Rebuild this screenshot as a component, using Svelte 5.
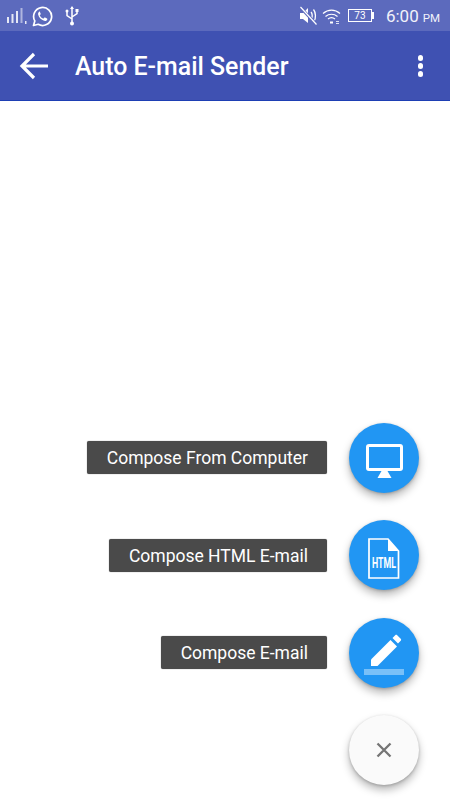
<script>
	const actions = [
		{ label: 'Compose From Computer', icon: 'computer' },
		{ label: 'Compose HTML E-mail', icon: 'html' },
		{ label: 'Compose E-mail', icon: 'pencil' }
	];
</script>

<div class="page">
	<div class="statusbar">
		<div class="status-left">
			<svg width="22" height="16" viewBox="0 0 22 16" class="signal">
				<rect x="0" y="9" width="2" height="6" />
				<rect x="4.500" y="6" width="2" height="9" />
				<rect x="9" y="3" width="2" height="12" />
				<rect x="13.500" y="0" width="2" height="15" opacity="0.6" />
				<rect x="18" y="13" width="1.500" height="3" />
			</svg>
			<svg width="21" height="21" viewBox="0 0 21 21" class="whatsapp">
				<path d="M1.500 19.500l1.300-4.600A9 9 0 1 1 6.200 18.300z" fill="none" stroke="#fff" stroke-width="1.700" stroke-linejoin="round" />
				<path d="M7.300 5.800c-.9.500-1.500 1.600-1.100 3 .7 2.600 3.100 5.100 5.900 6 1.300.4 2.500-.1 3.100-1.100.3-.6.200-1-.2-1.200l-1.900-1c-.4-.2-.7-.1-.9.200l-.6.800c-.2.200-.4.200-.7.100-1.300-.6-2.300-1.500-3-2.800-.1-.3-.1-.5.100-.7l.5-.6c.2-.3.300-.5.100-.9l-.8-1.800c-.2-.4-.6-.3-1-.1z" fill="#fff" />
			</svg>
			<svg width="16" height="20" viewBox="0 0 16 20" class="usb">
				<path d="M8 1v16M8 13L3 9.500V6M8 11l5-3.500V5" fill="none" stroke="#fff" stroke-width="1.500" />
				<path d="M8 0l2 3H6z" fill="#fff" />
				<circle cx="3" cy="5" r="1.500" fill="#fff" />
				<rect x="11.500" y="3" width="3" height="3" fill="#fff" />
				<circle cx="8" cy="17.500" r="2" fill="#fff" />
			</svg>
		</div>
		<div class="status-right">
			<svg width="20" height="20" viewBox="0 0 20 20">
				<path d="M1 7h3l5-5v15l-5-4H1z" fill="#fff" />
				<path d="M12 6c1.500 1.500 1.500 5 .5 7M14.500 3.500c2.500 3 2.500 9 .5 12" fill="none" stroke="#fff" stroke-width="1.300" />
				<path d="M1.500 1.500l16 17" stroke="#5c6abd" stroke-width="3" />
				<path d="M1.500 1l16 17.500" stroke="#fff" stroke-width="1.200" />
			</svg>
			<svg width="19" height="16" viewBox="0 0 19 16" class="wifi">
				<g fill="none" stroke="#fff" stroke-width="1.200">
					<path d="M1 5.500c5-4.500 12-4.500 17 0" />
					<path d="M3.500 8.500c3.500-3 8.500-3 12 0" />
					<path d="M6 11c2-1.600 5-1.600 7 0" />
				</g>
				<path d="M8 13.500h3v2H8z" fill="#fff" />
				<path d="M14 13h3v1h-3zM14 15h3v1h-3z" fill="#fff" opacity="0.8" />
			</svg>
			<div class="battery"><span>73</span></div>
			<div class="clock">6:00<small>PM</small></div>
		</div>
	</div>

	<header class="appbar">
		<svg width="30" height="28" viewBox="0 0 30 28" class="back">
			<path d="M29 14H3M15 2L3 14l12 12" fill="none" stroke="#fff" stroke-width="3.200" />
		</svg>
		<h1>Auto E-mail Sender</h1>
		<div class="overflow">
			<i></i><i></i><i></i>
		</div>
	</header>

	<main class="content">
		{#each actions as action}
			<div class="row">
				<span class="label">{action.label}</span>
				<button class="fab">
					{#if action.icon === 'computer'}
						<svg width="37" height="34" viewBox="0 0 37 34" class="low">
							<path d="M3 0h31a3 3 0 0 1 3 3v21a3 3 0 0 1-3 3H3a3 3 0 0 1-3-3V3a3 3 0 0 1 3-3z" fill="#fff" />
							<rect x="3" y="3" width="31" height="21" fill="#2196f3" />
							<path d="M15.500 27h6l4 7h-14z" fill="#fff" />
						</svg>
					{:else if action.icon === 'html'}
						<svg width="32" height="41" viewBox="0 0 32 41" class="low html-icon">
							<path d="M1 1h19l10.500 12v27H1z" fill="none" stroke="#fff" stroke-width="1.700" />
							<path d="M20 1v12h10.500z" fill="#fff" />
							<text class="html-text" x="16" y="30" text-anchor="middle" textLength="24" lengthAdjust="spacingAndGlyphs">HTML</text>
						</svg>
					{:else}
						<svg width="40" height="44" viewBox="0 0 40 44">
							<path d="M7 28.500L26.500 9l6.500 6.500L13.500 35H7z" fill="#fff" />
							<path d="M28.500 7l2.700-2.700c.6-.6 1.400-.6 2 0l3.500 3.500c.6.600.6 1.400 0 2L34 12.500z" fill="#fff" />
							<rect x="0" y="38" width="40" height="6.500" fill="#fff" opacity="0.4" />
						</svg>
					{/if}
				</button>
			</div>
		{/each}
		<div class="row">
			<button class="fab close">
				<svg width="16" height="16" viewBox="0 0 16 16">
					<path d="M1.500 1.500l13 13M14.500 1.500l-13 13" stroke="#757575" stroke-width="2.300" />
				</svg>
			</button>
		</div>
	</main>
</div>

<style>
	:global(body) {
		margin: 0;
		background: #fff;
	}

	.page {
		width: 450px;
		height: 800px;
		display: flex;
		flex-direction: column;
		overflow: hidden;
		font-family: Roboto, "Liberation Sans", sans-serif;
	}

	.statusbar {
		height: 31px;
		flex: none;
		display: flex;
		align-items: center;
		justify-content: space-between;
		padding: 0 10px 0 7px;
		background: #5c6abd;
		color: #fff;
	}

	.status-left,
	.status-right {
		display: flex;
		align-items: center;
	}

	.signal {
		fill: #fff;
		opacity: 0.85;
		margin-right: 3px;
	}

	.whatsapp {
		margin-top: 2px;
	}

	.usb {
		margin-left: 11px;
	}

	.wifi {
		margin-left: 3px;
	}

	.battery {
		position: relative;
		width: 22px;
		height: 11px;
		margin-left: 7px;
		margin-right: 14px;
		border: 1px solid #fff;
		font-size: 10px;
		line-height: 11px;
		text-align: center;
	}

	.battery::after {
		content: "";
		position: absolute;
		right: -3px;
		top: 2px;
		width: 2px;
		height: 7px;
		background: #fff;
	}

	.clock {
		font-size: 17px;
		color: #f1f2fa;
	}

	.clock small {
		font-size: 11.500px;
		margin-left: 4px;
	}

	.appbar {
		height: 70px;
		flex: none;
		box-sizing: border-box;
		display: flex;
		align-items: center;
		padding: 1px 27px 0 19px;
		background: #3f51b2;
		border-bottom: 1px solid #1e3fb4;
	}

	.back {
		flex: none;
	}

	h1 {
		flex: 1;
		margin: 0 0 0 26px;
		font-size: 24.900px;
		font-weight: 500;
		color: #fff;
	}

	.overflow {
		display: flex;
		flex-direction: column;
		gap: 2.500px;
	}

	.overflow i {
		display: block;
		width: 5.500px;
		height: 5.500px;
		border-radius: 50%;
		background: #fff;
	}

	.content {
		flex: 1;
		display: flex;
		flex-direction: column;
		justify-content: flex-end;
		gap: 27.500px;
		padding: 0 31px 15px 0;
	}

	.row {
		display: flex;
		align-items: center;
		justify-content: flex-end;
		gap: 22px;
	}

	.label {
		height: 33px;
		box-sizing: border-box;
		padding: 1px 19px 0 20px;
		border-radius: 2px;
		background: #4a4a4a;
		color: #fff;
		font-size: 17.500px;
		line-height: 33px;
		box-shadow: 0 0 1px rgba(0, 0, 0, 0.6);
	}

	.fab {
		width: 70px;
		height: 70px;
		padding: 0;
		border: none;
		border-radius: 50%;
		display: flex;
		align-items: center;
		justify-content: center;
		background: #2196f3;
		box-shadow: 0 5px 9px rgba(0, 0, 0, 0.28), 0 1px 3px rgba(0, 0, 0, 0.2);
	}

	.low {
		margin-top: 6px;
	}

	.html-icon {
		overflow: visible;
	}

	.close {
		background: #fafafa;
	}

	.html-text {
		font-family: Roboto, "Liberation Sans", sans-serif;
		font-size: 14px;
		font-weight: 700;
		fill: #fff;
	}
</style>
